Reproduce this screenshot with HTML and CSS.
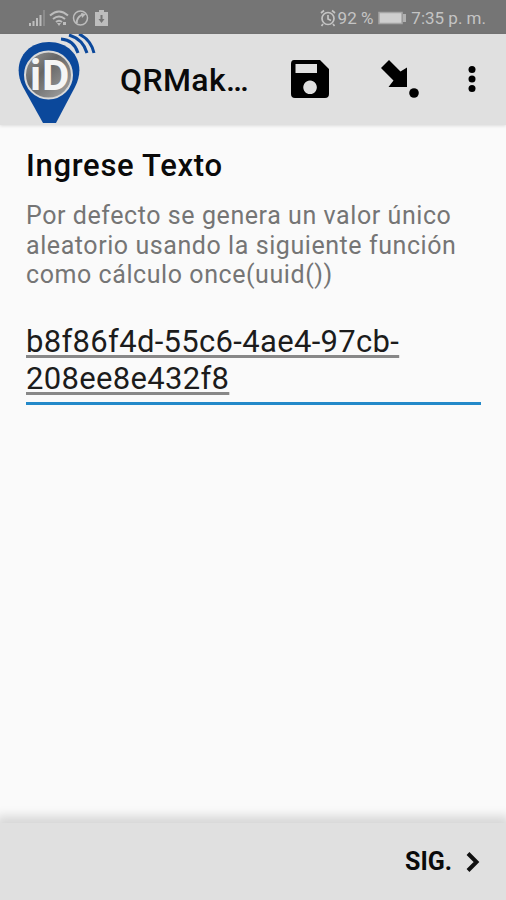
FILE: index.html
```html
<!DOCTYPE html>
<html lang="es">
<head>
  <meta charset="UTF-8" />
  <meta name="viewport" content="width=device-width, initial-scale=1.0" />
  <title>QRMaker</title>
  <link rel="stylesheet" href="styles.css">
</head>
<body>
  <div class="status-bar">
    <div class="status-left">
      <svg width="84" height="18" viewBox="0 0 84 18" fill="#bdbdbd">
        <path d="M1 14h2v3H1zM4.500 12h2v5h-2zM8 9h2v8H8zM11.500 6h2v11h-2z" />
        <path d="M15 1h2v16h-2z" fill="#8c8c8c" />
        <g fill="none" stroke="#bdbdbd" stroke-width="2">
          <path d="M22 6.500q9-8 18 0M25 10q6-5 12 0M28 13q3-2.500 6 0" />
          <circle cx="52.500" cy="9" r="7" stroke-width="1.500" />
          <path d="M49 14q-1-5 6-9" />
        </g>
        <path d="M29 14h4l-2 3zM35 13h3v3h-3zM53 4l5 1-4 4zM67 3h13v14H67zM71 1h5v2h-5z" />
        <path d="M72.500 6h2v4h2L73.500 14l-3-4h2z" fill="#757575" />
      </svg>
    </div>
    <div class="status-right">
      <svg width="18" height="18" viewBox="0 0 18 18" fill="none" stroke="#c4c4c4" stroke-width="1.700">
        <circle cx="9" cy="9.500" r="6" />
        <path d="M2 4l3-2.500M16 4l-3-2.500M9 6v4l3 1.500M4 15l-1.500 2M14 15l1.500 2" />
      </svg>
      <span class="percent">92 %</span>
      <svg class="battery" width="29" height="14" viewBox="0 0 29 14">
        <path d="M1 1.500h23v11H1z" fill="#cfcfcf" stroke="#a5a5a5" stroke-width="1.500" />
        <path d="M25 3h3v8h-3z" fill="#b0b0b0" />
      </svg>
      <span class="time">7:35 p. m.</span>
    </div>
  </div>

  <div class="app-bar">
    <svg class="logo" width="80" height="91" viewBox="0 0 80 91">
      <defs>
        <linearGradient id="disc" x1="0" y1="0" x2="1" y2="1">
          <stop offset="0" stop-color="#999" />
          <stop offset="0.400" stop-color="#666" />
          <stop offset="1" stop-color="#aaa" />
        </linearGradient>
      </defs>
      <path d="M27 89L7 53C-5 30 9 8 33 8s38 22 26 45L40 89z" fill="#0b489b" />
      <circle cx="32.500" cy="41" r="23.500" fill="url(#disc)" stroke="#d9d9d9" stroke-width="2" />
      <text class="logo-text" y="56"><tspan x="14">i</tspan><tspan x="26">D</tspan></text>
      <g fill="none" stroke="#0b489b" stroke-width="3">
        <path d="M45 5q13 1 17 14M53 1q14 4 18 18M63 0q12 6 15 19" />
      </g>
    </svg>
    <h1>QRMak…</h1>
    <svg class="save" width="40" height="40" viewBox="0 0 40 40">
      <path fill-rule="evenodd" d="M4 1h26l9 9v25q0 4-4 4H5q-4 0-4-4V5q0-4 3-4zM5.500 5v9H27V5zM20 21.500a6.800 6.800 0 1 0 .1 0z" />
    </svg>
    <svg class="jump" width="40" height="40" viewBox="0 0 40 40">
      <path d="M9 1L20.500 12.500 27 8.500V28H8.500l5-6.500L1 9z" />
      <circle cx="34" cy="34" r="4.800" />
    </svg>
    <svg class="more" width="10" height="28" viewBox="0 0 10 28">
      <circle cx="5" cy="4.500" r="3.500" />
      <circle cx="5" cy="14" r="3.500" />
      <circle cx="5" cy="23.500" r="3.500" />
    </svg>
  </div>

  <div class="content">
    <h2>Ingrese Texto</h2>
    <p class="hint">Por defecto se genera un valor único<br>aleatorio usando la siguiente función<br>como cálculo once(uuid())</p>
    <div class="answer">
      <span>b8f86f4d-55c6-4ae4-97cb-</span><br>
      <span>208ee8e432f8</span>
    </div>
  </div>

  <div class="footer">
    <span>SIG.</span>
    <svg width="16" height="22" viewBox="0 0 16 22" fill="none" stroke="#111" stroke-width="4">
      <path d="M3 2.500l8.500 8.500L3 19.500" />
    </svg>
  </div>
</body>
</html>
```
FILE: styles.css
```css
* {
  box-sizing: border-box;
}
body {
  margin: 0;
  height: 900px;
  display: flex;
  flex-direction: column;
  font-family: Roboto, "Liberation Sans", sans-serif;
  background: #fafafa;
  color: #0a0a0a;
  overflow: hidden;
}
h1, h2, p {
  margin: 0;
}
svg {
  display: block;
  flex: none;
}
.status-bar {
  height: 34px;
  background: #757575;
  color: #c4c4c4;
  display: flex;
  justify-content: space-between;
  align-items: center;
  padding: 2px 20px 0 28px;
  font-size: 17px;
}
.status-right {
  display: flex;
  align-items: center;
  white-space: nowrap;
}
.percent {
  margin-left: 1px;
}
.battery {
  margin: 0 4px 0 5px;
}
.app-bar {
  height: 91px;
  background: #e0e0e0;
  box-shadow: 0 1px 3px rgba(0,0,0,0.12);
  display: flex;
  align-items: center;
}
.logo {
  margin-left: 16px;
}
.logo-text {
  font-size: 42px;
  font-weight: 700;
  fill: #f5f5f5;
}
h1 {
  width: 168px;
  margin-left: 24px;
  font-size: 32px;
  font-weight: 500;
  letter-spacing: 0.4px;
}
.save,
.jump,
.more {
  margin-bottom: 2px;
}
.save {
  margin-left: 2px;
}
.jump {
  margin-left: 50px;
}
.more {
  margin-left: 47px;
}
.content {
  flex: 1;
  padding: 22px 25px 0 26px;
}
h2 {
  font-size: 31px;
  font-weight: 500;
  line-height: 38px;
  letter-spacing: 0.7px;
}
.hint {
  margin-top: 16px;
  font-size: 25px;
  line-height: 29.5px;
  letter-spacing: 0.57px;
  color: #757575;
  white-space: nowrap;
}
.answer {
  margin-top: 33px;
  height: 82px;
  border-bottom: 3px solid #2389c9;
  font-size: 31px;
  line-height: 37px;
  letter-spacing: 0.32px;
  color: #1c1c1c;
}
.answer span {
  text-decoration: underline;
  text-decoration-color: #888;
  text-decoration-thickness: 2.5px;
  text-underline-offset: 3px;
}
.footer {
  height: 77px;
  background: #e0e0e0;
  box-shadow: 0 -3px 10px 4px rgba(0,0,0,0.14);
  display: flex;
  justify-content: flex-end;
  align-items: center;
  gap: 13px;
  padding-right: 25px;
  font-size: 25px;
  font-weight: 700;
}
```
